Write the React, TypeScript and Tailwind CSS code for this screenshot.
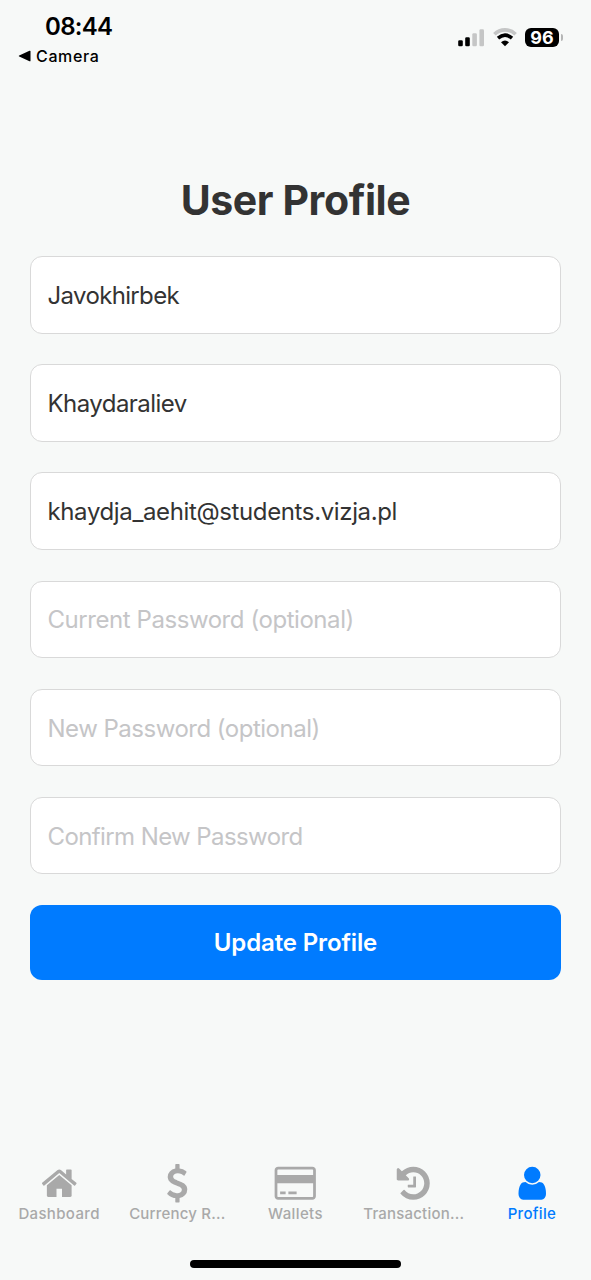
import React from 'react';

const GLYPHS = {
  home: 'M1472 992v480q0 26-19 45t-45 19h-384v-384h-256v384h-384q-26 0-45-19t-19-45v-480q0-1 .5-3t.5-3l575-474 575 474q1 2 1 6zm223-69l-62 74q-8 9-21 11h-3q-13 0-21-7l-692-577-692 577q-12 8-24 7-13-2-21-11l-62-74q-8-10-7-23.5t11-21.5l719-599q32-26 76-26t76 26l244 204v-195q0-14 9-23t23-9h192q14 0 23 9t9 23v408l219 182q10 8 11 21.5t-7 23.5z',
  dollar: 'M1362 1185q0 153-99.5 263.5t-258.5 136.5v175q0 14-9 23t-23 9h-135q-13 0-22.5-9.5t-9.5-22.5v-175q-66-9-127.5-31t-101.5-44.5-74-48-46.5-37.5-17.5-18q-17-21-2-41l103-135q7-10 23-12 15-2 24 9l2 2q113 99 243 125 37 8 74 8 81 0 142.5-43t61.5-122q0-28-15-53t-33.500-42-58.500-37.500-66-32-80-32.500q-39-16-61.500-25t-61.500-26.500-62.500-31-56.500-35.500-53.500-42.500-43.500-49-35.500-58-21-66.500-8.500-78q0-138 98-242t255-134v-180q0-13 9.500-22.500t22.500-9.500h135q14 0 23 9t9 23v176q57 6 110.500 23t87 33.500 63.500 37.500 39 29 15 14q17 18 5 38l-81 146q-8 15-23 16-14 3-27-7-3-3-14.500-12t-39-26.500-58.500-32-74.500-26-85.500-11.500q-95 0-155 43t-60 111q0 26 8.500 48t29.500 41.500 39.500 33 56 31 60.500 27 70 27.500q53 20 81 31.500t76 35 75.500 42.500 62 50 53 63.500 31.500 76.500 13 94z',
  card: 'M1696 128q66 0 113 47t47 113v1216q0 66-47 113t-113 47h-1600q-66 0-113-47t-47-113v-1216q0-66 47-113t113-47h1600zm-1600 128q-13 0-22.500 9.500t-9.500 22.500v224h1664v-224q0-13-9.500-22.500t-22.500-9.500h-1600zm1600 1280q13 0 22.500-9.500t9.500-22.500v-608h-1664v608q0 13 9.500 22.500t22.500 9.500h1600zm-1504-128v-128h256v128h-256zm384 0v-128h384v128h-384z',
  history: 'M1664 896q0 156-61 298t-164 245-245 164-298 61q-172 0-327-72.500t-264-204.500q-7-10-6.500-22.500t8.500-20.500l137-138q10-9 25-9 16 2 23 12 73 95 179 147t225 52q104 0 198.500-40.500t163.500-109.500 109.500-163.500 40.500-198.500-40.500-198.500-109.500-163.500-163.500-109.500-198.500-40.500q-98 0-188 35.500t-160 101.500l137 138q31 30 14 69-17 40-59 40h-448q-26 0-45-19t-19-45v-448q0-42 40-59 39-17 69 14l130 129q107-101 244.500-156.500t284.500-55.500q156 0 298 61t245 164 164 245 61 298zm-640-288v448q0 14-9 23t-23 9h-320q-14 0-23-9t-9-23v-64q0-14 9-23t23-9h224v-352q0-14 9-23t23-9h64q14 0 23 9t9 23z',
  user: 'M1536 1399q0 109-62.500 187t-150.500 78h-854q-88 0-150.500-78t-62.500-187q0-85 8.500-160.500t31.500-152 58.500-131 94-89 134.500-34.500q131 128 313 128t313-128q76 0 134.500 34.500t94 89 58.500 131 31.500 152 8.500 160.500zm-256-887q0 159-112.500 271.500t-271.500 112.500-271.500-112.500-112.500-271.500 112.500-271.500 271.500-112.500 271.500 112.500 112.500 271.500z',
};

const FIELDS = [
  { text: 'Javokhirbek', filled: true, spacing: 'tracking-[-0.65px]' },
  { text: 'Khaydaraliev', filled: true, spacing: 'tracking-[-0.55px]' },
  { text: 'khaydja_aehit@students.vizja.pl', filled: true, spacing: 'tracking-[-0.37px]' },
  { text: 'Current Password (optional)', filled: false, spacing: 'tracking-[-0.44px]' },
  { text: 'New Password (optional)', filled: false, spacing: 'tracking-[-0.5px]' },
  { text: 'Confirm New Password', filled: false, spacing: 'tracking-[-0.6px]' },
];

const TABS: { label: string; icon: keyof typeof GLYPHS; active?: boolean; spacing: string }[] = [
  { label: 'Dashboard', icon: 'home', spacing: 'tracking-[0.35px]' },
  { label: 'Currency R...', icon: 'dollar', spacing: 'tracking-[0.2px]' },
  { label: 'Wallets', icon: 'card', spacing: 'tracking-[0.4px]' },
  { label: 'Transaction...', icon: 'history', spacing: 'tracking-[0.2px]' },
  { label: 'Profile', icon: 'user', active: true, spacing: 'tracking-[0.3px]' },
];

function StatusBar() {
  return (
    <header className="flex h-[179px] items-start justify-between pl-[18px] pr-[28.500px] text-black">
      <div className="pt-[12px]">
        <div className="pl-[27px] text-[24px] leading-[30px] font-semibold tracking-[-0.7px]">08:44</div>
        <div className="flex items-center pt-[4px] text-[16px] leading-[20px] font-[450] tracking-[0.65px]">
          <svg className="mr-[5px]" width="13" height="12" viewBox="0 0 13 12">
            <path d="M1.200 5.400 11.500.8q1-.4 1 .5v9.400q0 .9-1 .5L1.200 6.600q-1.100-.6 0-1.200z" />
          </svg>
          Camera
        </div>
      </div>
      <div className="mt-[27px] flex h-[20px] items-center pt-[1px]">
        <svg width="27" height="19" viewBox="0 0 27 19">
          <rect x="0.200" y="12.200" width="4.600" height="6" rx="1.300" />
          <rect x="7.200" y="9.200" width="4.600" height="9" rx="1.300" />
          <rect x="14.300" y="5.200" width="4.600" height="13" rx="1.300" fill="#c5c6c6" />
          <rect x="21.400" y="1.200" width="4.600" height="17" rx="1.300" fill="#c5c6c6" />
        </svg>
        <svg className="ml-[8px]" width="24" height="19" viewBox="0 0 24 19" fill="none">
          <path d="M1.400 6.300C7.300.4 16.700.4 22.600 6.300" stroke="#c5c6c6" strokeWidth="3.600" />
          <path d="M5 10.200q7-6 14 0" stroke="#000" strokeWidth="3.600" />
          <path d="M12 18.300 8 14.200q4-3.300 8 0z" fill="#000" />
        </svg>
        <div className="ml-[8px] flex h-[19px] w-[34px] items-center justify-center rounded-[6px] bg-black text-[18px] leading-none font-bold text-white">
          96
        </div>
        <div className="ml-[1.500px] h-[7px] w-[2px] rounded-r-full bg-[#b5b6b6]" />
      </div>
    </header>
  );
}

export default function App() {
  return (
    <div className="flex h-[1280px] w-[591px] flex-col bg-[#f7f9f8] font-['Inter','Liberation_Sans',sans-serif]">
      <StatusBar />
      <main className="flex flex-col px-[30px]">
        <h1 className="h-[77px] text-center text-[41px] leading-[42px] font-bold tracking-[-0.4px] text-[#333333]">
          User Profile
        </h1>
        <form className="flex flex-col">
          {FIELDS.map((field) => (
            <div
              key={field.text}
              className={`mb-[30.700px] flex h-[77.500px] items-center rounded-[12px] border-[1.500px] border-[#d9d9d9] bg-white pt-[2px] pl-[16.500px] text-[24px] whitespace-nowrap ${field.spacing} ${
                field.filled ? 'text-[#333333]' : 'text-[#c5c5c7]'
              }`}
            >
              <span>{field.text}</span>
            </div>
          ))}
          <button
            type="button"
            className="h-[74.500px] rounded-[12px] bg-[#007bff] pt-[1.500px] text-[24px] font-semibold tracking-[-0.13px] text-white"
          >
            <span>Update Profile</span>
          </button>
        </form>
      </main>
      <nav className="mt-auto grid h-[96px] grid-cols-5">
        {TABS.map((tab) => (
          <div
            key={tab.label}
            className={`flex flex-col items-center text-[15px] leading-[20px] font-[450] whitespace-nowrap ${tab.spacing} ${
              tab.active ? 'text-[#007bff]' : 'text-[#a9a9a9]'
            }`}
          >
            <svg className="mb-[1px] overflow-visible" width="38.500" height="38.500" viewBox="0 0 1792 1792" fill="currentColor">
              <path d={GLYPHS[tab.icon]} />
            </svg>
            <span>{tab.label}</span>
          </div>
        ))}
      </nav>
      <div className="flex justify-center pb-[12px]">
        <div className="h-[8px] w-[211px] rounded-full bg-black" />
      </div>
    </div>
  );
}
